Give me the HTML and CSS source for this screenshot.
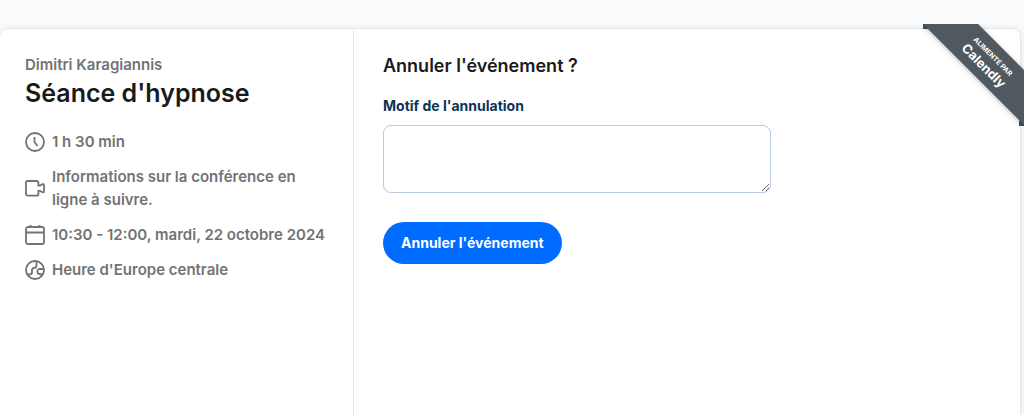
FILE: index.html
```html
<!DOCTYPE html>
<html lang="fr">
<head>
    <meta charset="UTF-8">
    <meta name="viewport" content="width=device-width, initial-scale=1.0">
    <title>Annuler l'événement</title>
    <link rel="stylesheet" href="styles.css">
</head>
<body>
    <main class="card">
        <section class="details">
            <div class="host">Dimitri Karagiannis</div>
            <h1>Séance d'hypnose</h1>
            <ul class="info-list">
                <li>
                    <svg class="icon" viewBox="0 0 20 20"><circle cx="10" cy="10" r="9"/><path d="M9.500 5v5l3 4"/></svg>
                    <span>1 h 30 min</span>
                </li>
                <li>
                    <svg class="icon" viewBox="0 0 20 20"><path d="M2.700 3h9a1.700 1.700 0 0 1 1.700 1.700V7.500h1.600l2.500-1.300q1.500-.4 1.500 1v6q0 1.400-1.500 1L15 12.900h-1.600v3a1.700 1.700 0 0 1-1.700 1.700h-9A1.700 1.700 0 0 1 1 15.900V4.700A1.700 1.700 0 0 1 2.700 3z"/></svg>
                    <span>Informations sur la conférence en ligne à suivre.</span>
                </li>
                <li>
                    <svg class="icon" viewBox="0 0 20 20"><rect x="1" y="2" width="18" height="17" rx="2"/><path d="M1 7.500h18M5.500 0v3M14.500 0v3"/></svg>
                    <span>10:30 - 12:00, mardi, 22 octobre 2024</span>
                </li>
                <li>
                    <svg class="icon" viewBox="0 0 20 20"><circle cx="10" cy="10" r="9"/><path d="M2 14.500h2.500a2.500 2.500 0 0 0 2.500-2.500V10a2 2 0 0 1 2-2 2.500 2.500 0 0 0 2.500-2.500V1.200M18.800 9h-4.800a2.700 2.700 0 0 0 0 5h1a1.500 1.500 0 0 1 1.500 1.500v.8"/></svg>
                    <span>Heure d'Europe centrale</span>
                </li>
            </ul>
        </section>

        <form class="cancel-form">
            <h2>Annuler l'événement ?</h2>
            <label for="reason">Motif de l'annulation</label>
            <textarea id="reason" name="reason"></textarea>
            <button type="button">Annuler l'événement</button>
        </form>

        <a class="badge" href="#">
            <span class="ribbon">
                <span class="ribbon-small">Alimenté par</span>
                <span class="ribbon-brand">Calendly</span>
            </span>
        </a>
    </main>
</body>
</html>
```

FILE: styles.css
```css
* {
    box-sizing: border-box;
}
body {
    margin: 0;
    padding: 28px 3px 0 0;
    min-height: 100vh;
    display: flex;
    background-color: #fafbfd;
    font-family: "Inter", "Liberation Sans", sans-serif;
    font-size: 15px;
    color: #1a1a1a;
    overflow: hidden;
}
.card {
    position: relative;
    flex: 1;
    display: flex;
    background-color: #fff;
    border: 1px solid #e6e6e6;
    border-width: 1px 1px 0 0;
    border-radius: 8px 8px 0 0;
    box-shadow: 0 1px 8px rgba(0,0,0,0.08);
}
.details {
    width: 354px;
    padding: 24px 24px 24px 25px;
    border-right: 1px solid #e6e6e6;
    color: #737373;
    font-weight: 600;
    line-height: 23px;
}
h1 {
    margin: 0;
    color: #1a1a1a;
    font-size: 25px;
    font-weight: 600;
    line-height: 34px;
}
.info-list {
    list-style: none;
    margin: 20px 0 0;
    padding: 0;
    display: flex;
    flex-direction: column;
    gap: 12px;
}
.info-list li {
    display: flex;
    align-items: center;
    gap: 7px;
}
.icon {
    flex: none;
    width: 20px;
    height: 20px;
    fill: none;
    stroke: #737373;
    stroke-width: 1.8;
}
.cancel-form {
    flex: 1;
    display: flex;
    flex-direction: column;
    align-items: flex-start;
    padding: 25px 29px;
}
h2 {
    margin: 0 0 17px;
    font-size: 18px;
    font-weight: 600;
    line-height: 24px;
}
label {
    margin-bottom: 8px;
    color: #0b3558;
    font-size: 14px;
    font-weight: 700;
    line-height: 22px;
}
textarea {
    width: 100%;
    max-width: 388px;
    height: 68px;
    margin-bottom: 29px;
    padding: 8px 12px;
    border: 1px solid #b9cbdc;
    border-radius: 8px;
    font: inherit;
    resize: vertical;
}
button {
    padding: 10px 18px;
    border: none;
    border-radius: 22px;
    background-color: #006bff;
    color: #fff;
    font-family: inherit;
    font-size: 14px;
    font-weight: 700;
    line-height: 22px;
    cursor: pointer;
}
/* corner ribbon, folded over the card edge */
.badge {
    position: absolute;
    top: -5px;
    right: -8px;
    width: 105px;
    height: 102px;
    overflow: hidden;
    color: #fff;
    text-decoration: none;
}
.badge::before,
.badge::after {
    content: "";
    position: absolute;
    width: 5px;
    height: 5px;
    background-color: #44505a;
}
.badge::before {
    top: 0;
    left: 0;
}
.badge::after {
    right: 4px;
    bottom: 0;
}
.ribbon {
    position: absolute;
    z-index: 1;
    top: 18px;
    left: -20px;
    width: 170px;
    height: 39px;
    display: flex;
    flex-direction: column;
    align-items: center;
    justify-content: center;
    background-color: #50595f;
    box-shadow: 0 1px 5px rgba(0,0,0,0.25);
    transform: rotate(45deg);
}
.ribbon-small {
    font-size: 7px;
    font-weight: 700;
    line-height: 10px;
    text-transform: uppercase;
}
.ribbon-brand {
    font-size: 13px;
    font-weight: 700;
    line-height: 14px;
}
```
